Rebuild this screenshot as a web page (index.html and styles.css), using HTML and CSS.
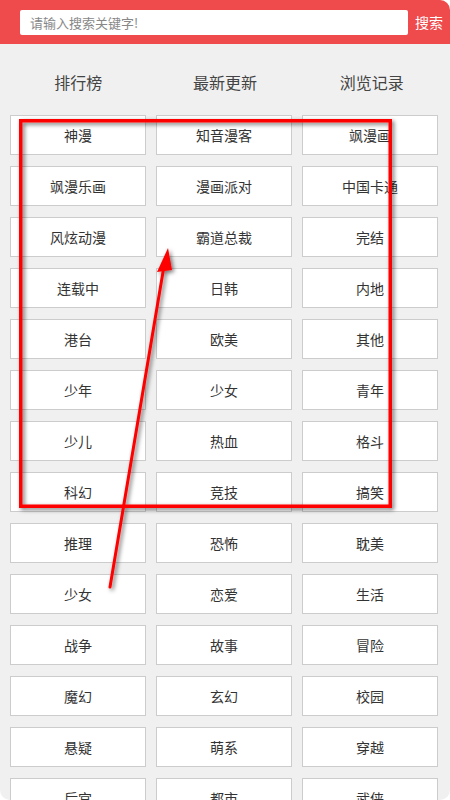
FILE: index.html
```html
<!DOCTYPE html>
<html lang="zh-CN">
<head>
<meta charset="utf-8">
<title>漫画分类</title>
<link rel="stylesheet" href="styles.css">
</head>
<body>
<div class="app">
  <header class="search-bar">
    <div class="search-input">请输入搜索关键字!</div>
    <span class="search-btn">搜索</span>
  </header>
  <nav class="tabs">
    <span>排行榜</span>
    <span>最新更新</span>
    <span>浏览记录</span>
  </nav>
  <div class="cats">
    <a>神漫</a><a>知音漫客</a><a>飒漫画</a>
    <a>飒漫乐画</a><a>漫画派对</a><a>中国卡通</a>
    <a>风炫动漫</a><a>霸道总裁</a><a>完结</a>
    <a>连载中</a><a>日韩</a><a>内地</a>
    <a>港台</a><a>欧美</a><a>其他</a>
    <a>少年</a><a>少女</a><a>青年</a>
    <a>少儿</a><a>热血</a><a>格斗</a>
    <a>科幻</a><a>竞技</a><a>搞笑</a>
    <a>推理</a><a>恐怖</a><a>耽美</a>
    <a>少女</a><a>恋爱</a><a>生活</a>
    <a>战争</a><a>故事</a><a>冒险</a>
    <a>魔幻</a><a>玄幻</a><a>校园</a>
    <a>悬疑</a><a>萌系</a><a>穿越</a>
    <a>后宫</a><a>都市</a><a>武侠</a>
  </div>
  <svg class="markup" width="450" height="800" viewBox="0 0 450 800">
    <defs>
      <filter id="shade" x="-10%" y="-10%" width="130%" height="130%">
        <feDropShadow dx="2" dy="2" stdDeviation="2" flood-color="#000" flood-opacity="0.55"/>
      </filter>
    </defs>
    <g filter="url(#shade)">
      <rect x="20.75" y="120.75" width="369.5" height="385.5" fill="none" stroke="#ff0000" stroke-width="3.5"/>
      <line x1="110" y1="587" x2="164" y2="266" stroke="#ff0000" stroke-width="3" stroke-linecap="round"/>
      <polygon points="168,248 157,272 172,270" fill="#ff0000"/>
    </g>
  </svg>
</div>
</body>
</html>
```
FILE: styles.css
```css
html, body {
  margin: 0;
  padding: 0;
  background: #ffffff;
}

body {
  font-family: "Noto Sans CJK SC", "Noto Sans", sans-serif;
  color: #333;
}

.app {
  position: relative;
  width: 450px;
  height: 800px;
  background: #f0f0f0;
  border-radius: 0 10px 10px 10px;
  overflow: hidden;
}

.search-bar {
  height: 44px;
  background: #ef4a4c;
  display: flex;
  align-items: center;
  padding: 0 7px 0 20px;
  gap: 7px;
  box-sizing: border-box;
}

.search-input {
  flex: 1;
  height: 25px;
  background: #fff;
  border-radius: 2px;
  padding-left: 10px;
  font-size: 13px;
  line-height: 25px;
  color: #888;
}

.search-btn {
  color: #fff;
  font-size: 14px;
  line-height: 25px;
}

.tabs {
  display: grid;
  grid-template-columns: repeat(3, 1fr);
  padding: 28px 5px 23px 5px;
  font-size: 16px;
  line-height: 20px;
  color: #444;
  text-align: center;
}

.cats {
  display: grid;
  grid-template-columns: repeat(3, 136px);
  grid-auto-rows: 40px;
  column-gap: 10px;
  row-gap: 11px;
  padding: 0 12px 0 10px;
}

.cats a {
  display: flex;
  align-items: center;
  justify-content: center;
  box-sizing: border-box;
  background: #fff;
  border: 1px solid #cccccc;
  font-size: 14px;
  color: #333;
}

.markup {
  position: absolute;
  left: 0;
  top: 0;
  pointer-events: none;
}
```
